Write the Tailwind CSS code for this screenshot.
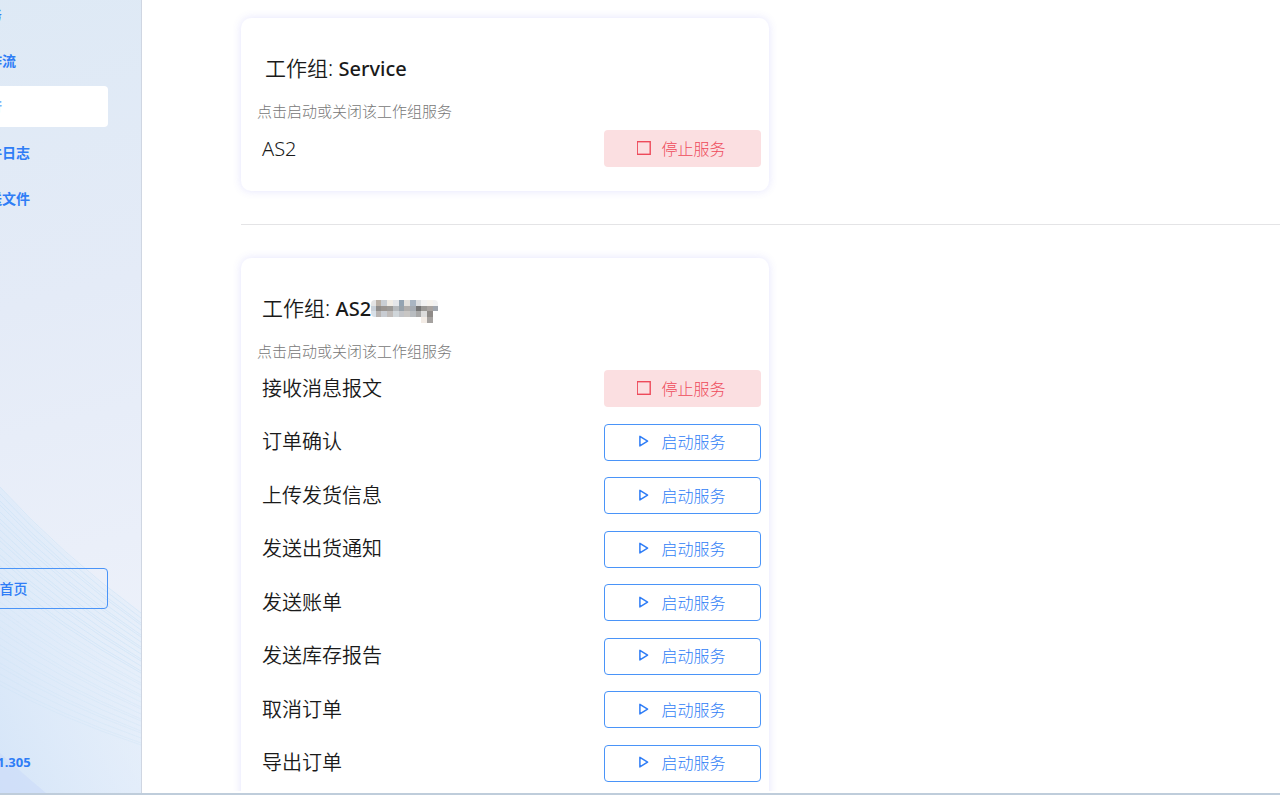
<!DOCTYPE html>
<html lang="zh-CN">
<head>
    <meta charset="UTF-8">
    <meta name="viewport" content="width=device-width, initial-scale=1.0">
    <title>运行</title>
    <script src="https://cdn.jsdelivr.net/npm/@tailwindcss/browser@4"></script>
    <style> body { font-family: 'Noto Sans', 'Noto Sans CJK SC', sans-serif; } </style>
</head>
<body class="h-screen flex flex-col overflow-hidden bg-white text-[#1a1a1a]">
    <svg class="hidden">
        <symbol id="icon-play" viewBox="0 0 16 16"><path d="M2.9 2.3v9.6L10.6 7.1z" fill="none" stroke="currentColor" stroke-width="1.5" stroke-linejoin="round"/></symbol>
        <symbol id="icon-stop" viewBox="0 0 16 16"><rect x=".2" y=".7" width="13" height="12.6" fill="none" stroke="currentColor" stroke-width="1.4"/></symbol>
    </svg>
    <div class="flex-1 min-h-0 flex">
        <!-- sidebar, scrolled halfway out to the left -->
        <aside class="relative isolate shrink-0 w-[284px] -ml-[142px] px-[33px] flex flex-col border-r border-[#cfd6e2] bg-linear-165 from-[#dde9f5] via-[#e4ebf7] via-40% to-[#f0f3fb] text-sm font-bold text-[#2f7df6]">
            <svg id="waves" class="absolute -z-10 right-0 bottom-0 w-[141px] h-[320px]" viewBox="0 0 141 320" aria-hidden="true">
                <defs>
                    <linearGradient id="fade" x1="0" y1="1" x2="1" y2="0">
                        <stop offset="0" stop-color="#d5e5f8"/>
                        <stop offset="1" stop-color="#e3effb" stop-opacity=".3"/>
                    </linearGradient>
                </defs>
                <path d="M0 14Q60 82 141 140V320H0z" fill="url(#fade)"/>
                <g id="wave-lines" fill="none" stroke="#cbe2f7" stroke-width=".8"></g>
                <path d="M0 280Q22 300 46 320H0z" fill="#cddbf9" opacity=".65"/>
            </svg>
            <nav class="-mt-[6px] flex flex-col gap-[5px]">
                <a href="#" class="h-[41px] pl-[83px] flex items-center rounded">任务</a>
                <a href="#" class="h-[41px] pl-[83px] flex items-center rounded">工作流</a>
                <a href="#" class="h-[41px] pl-[83px] flex items-center rounded bg-white text-[#79b4fb]" aria-current="page">运行</a>
                <a href="#" class="h-[41px] pl-[83px] flex items-center rounded">文件日志</a>
                <a href="#" class="h-[41px] pl-[83px] flex items-center rounded">发送文件</a>
            </nav>
            <button type="button" class="mt-auto h-[41px] rounded border border-[#4a94f8] font-medium">返回首页</button>
            <p class="mt-[143px] mb-[21px] pl-1.5 text-center text-[13px] leading-5">V 1.1.305</p>
        </aside>

        <main class="flex-1 min-w-0 mb-[2px] pt-[18px] pl-[99px] overflow-hidden">
            <section class="w-[528px] pt-[35px] pb-6 rounded-[10px] shadow-[0_0_8px_rgba(90,90,240,0.17)]">
                <h2 class="pl-6 text-[21px] leading-[30px] font-[350]">工作组: <span class="font-medium text-xl">Service</span></h2>
                <p class="mt-4 pl-4 text-[15px] leading-6 font-light text-[#777]">点击启动或关闭该工作组服务</p>
                <ul class="mt-[7px] pl-[21px] pr-2">
                    <li class="flex items-center justify-between text-xl font-[350]">AS2
                        <button type="button" class="w-[157px] h-[37px] pr-[2px] flex items-center justify-center gap-2 rounded bg-[#fbdfe1] text-base font-light text-[#ee4a5a]"><svg class="size-4"><use href="#icon-stop"/></svg>停止服务</button>
                    </li>
                </ul>
            </section>

            <hr class="my-[33px] border-[#e4e4e6]">

            <section class="w-[528px] pt-[35px] pb-6 rounded-[10px] shadow-[0_0_8px_rgba(90,90,240,0.17)]">
                <h2 class="pl-[21px] flex items-center text-[21px] leading-[30px] font-[350]"><span>工作组: <span class="font-medium text-xl">AS2</span></span>
                    <!-- masked part of the name -->
                    <svg class="w-[68px] h-[30px]" viewBox="0 0 68 30" aria-hidden="true">
                        <clipPath id="mask-shape"><path d="M4 7H63Q67 7 67 11V18H62V30H50V24H4Q0 24 0 20V11Q0 7 4 7z"/></clipPath>
                        <g id="mask-cells" clip-path="url(#mask-shape)" shape-rendering="crispEdges"></g>
                    </svg>
                </h2>
                <p class="mt-4 pl-4 text-[15px] leading-6 font-light text-[#777]">点击启动或关闭该工作组服务</p>
                <ul class="mt-[7px] pl-[21px] pr-2 h-[412px] flex flex-col justify-between">
                    <li class="flex items-center justify-between text-xl font-[350]">接收消息报文
                        <button type="button" class="w-[157px] h-[37px] pr-[2px] flex items-center justify-center gap-2 rounded bg-[#fbdfe1] text-base font-light text-[#ee4a5a]"><svg class="size-4"><use href="#icon-stop"/></svg>停止服务</button>
                    </li>
                    <li class="flex items-center justify-between text-xl font-[350]">订单确认
                        <button type="button" class="w-[157px] h-[37px] pr-[2px] flex items-center justify-center gap-2 rounded border border-[#4a94f8] text-base font-light text-[#2f7df6]"><svg class="size-4"><use href="#icon-play"/></svg>启动服务</button>
                    </li>
                    <li class="flex items-center justify-between text-xl font-[350]">上传发货信息
                        <button type="button" class="w-[157px] h-[37px] pr-[2px] flex items-center justify-center gap-2 rounded border border-[#4a94f8] text-base font-light text-[#2f7df6]"><svg class="size-4"><use href="#icon-play"/></svg>启动服务</button>
                    </li>
                    <li class="flex items-center justify-between text-xl font-[350]">发送出货通知
                        <button type="button" class="w-[157px] h-[37px] pr-[2px] flex items-center justify-center gap-2 rounded border border-[#4a94f8] text-base font-light text-[#2f7df6]"><svg class="size-4"><use href="#icon-play"/></svg>启动服务</button>
                    </li>
                    <li class="flex items-center justify-between text-xl font-[350]">发送账单
                        <button type="button" class="w-[157px] h-[37px] pr-[2px] flex items-center justify-center gap-2 rounded border border-[#4a94f8] text-base font-light text-[#2f7df6]"><svg class="size-4"><use href="#icon-play"/></svg>启动服务</button>
                    </li>
                    <li class="flex items-center justify-between text-xl font-[350]">发送库存报告
                        <button type="button" class="w-[157px] h-[37px] pr-[2px] flex items-center justify-center gap-2 rounded border border-[#4a94f8] text-base font-light text-[#2f7df6]"><svg class="size-4"><use href="#icon-play"/></svg>启动服务</button>
                    </li>
                    <li class="flex items-center justify-between text-xl font-[350]">取消订单
                        <button type="button" class="w-[157px] h-[37px] pr-[2px] flex items-center justify-center gap-2 rounded border border-[#4a94f8] text-base font-light text-[#2f7df6]"><svg class="size-4"><use href="#icon-play"/></svg>启动服务</button>
                    </li>
                    <li class="flex items-center justify-between text-xl font-[350]">导出订单
                        <button type="button" class="w-[157px] h-[37px] pr-[2px] flex items-center justify-center gap-2 rounded border border-[#4a94f8] text-base font-light text-[#2f7df6]"><svg class="size-4"><use href="#icon-play"/></svg>启动服务</button>
                    </li>
                </ul>
            </section>
        </main>
    </div>
    <div class="h-[2px] shrink-0 bg-[#bfcddb]"></div>

    <script>
        const NS = 'http://www.w3.org/2000/svg';
        const lines = document.getElementById('wave-lines');
        for (let i = 0; i < 34; i++) {
            const y = 14 + i * 6 + (i % 3);
            const path = document.createElementNS(NS, 'path');
            path.setAttribute('d', `M0 ${y}Q60 ${y + 66 - i} 141 ${y + 126 - i * 2}`);
            path.setAttribute('opacity', i < 16 ? 0.75 : 0.4);
            lines.appendChild(path);
        }

        const cells = [
            ['#e4e4e4', '#b9b0a6', '#c9ced4', '#f0ece6', '#e4e6ea', '#93a3b1', '#e2e0dc', '#a9b5c2', '#dcdee0', '#f2f2f2', '#f6f3ee', '#f2f2f2'],
            ['#c8d0d8', '#8f8d8b', '#9a9591', '#9c9a98', '#b5b9bd', '#98a2aa', '#b0aeac', '#a5abb2', '#757575', '#9a9895', '#a8a3a0', '#a0a6ae'],
            ['#d8e0e8', '#b8b4b2', '#c8ccd2', '#c0bcba', '#d0d6da', '#c2c4c8', '#c8c6c4', '#b8bcc0', '#a8a8a8', '#dcdcdc', '#8f8b88', '#eeeeee'],
            [null, null, null, null, null, null, null, null, null, '#f3ece6', '#a5a2a0', null]
        ];
        const mask = document.getElementById('mask-cells');
        cells.forEach((row, r) => row.forEach((color, c) => {
            if (!color) return;
            const rect = document.createElementNS(NS, 'rect');
            rect.setAttribute('x', c * 5.7 - 1);
            rect.setAttribute('y', 7 + r * 5.7);
            rect.setAttribute('width', 5.8);
            rect.setAttribute('height', 5.8);
            rect.setAttribute('fill', color);
            mask.appendChild(rect);
        }));
    </script>
</body>
</html>
